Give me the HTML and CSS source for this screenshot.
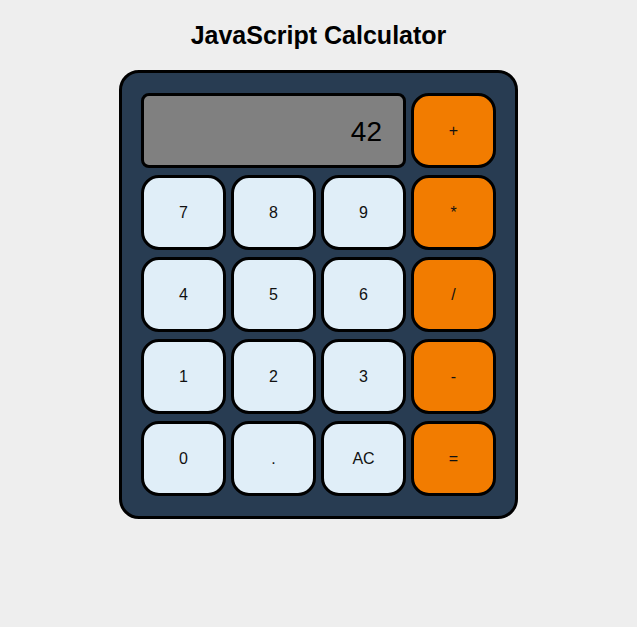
FILE: index.html
```html
<!DOCTYPE html>
<html>
<head>
<meta charset="utf-8">
<title>JavaScript Calculator</title>
<link rel="stylesheet" href="styles.css">
</head>
<body>
<h1 class="title">JavaScript Calculator</h1>
<div class="calculator">
  <div class="display">42</div>
  <button class="key op">+</button>
  <button class="key">7</button>
  <button class="key">8</button>
  <button class="key">9</button>
  <button class="key op">*</button>
  <button class="key">4</button>
  <button class="key">5</button>
  <button class="key">6</button>
  <button class="key op">/</button>
  <button class="key">1</button>
  <button class="key">2</button>
  <button class="key">3</button>
  <button class="key op">-</button>
  <button class="key">0</button>
  <button class="key">.</button>
  <button class="key">AC</button>
  <button class="key op">=</button>
</div>
</body>
</html>
```
FILE: styles.css
```css
* { box-sizing: border-box; }
body {
  margin: 0;
  background: #eeeeee;
  font-family: "Liberation Sans", Arial, sans-serif;
  display: flex;
  flex-direction: column;
  align-items: center;
}
.title {
  font-size: 25px;
  line-height: 28px;
  font-weight: bold;
  margin: 21px 0 21px;
  color: #000;
}
.calculator {
  background: #283c52;
  border: 3px solid #000;
  border-radius: 20px;
  padding: 20px 19px;
  display: grid;
  grid-template-columns: repeat(4, 85px);
  grid-auto-rows: 75px;
  column-gap: 5px;
  row-gap: 7px;
}
.display {
  grid-column: span 3;
  background: #808080;
  border: 3px solid #000;
  border-radius: 8px;
  font-size: 28px;
  line-height: 32px;
  text-align: right;
  padding: 20px 21px 0 0;
  color: #000;
}
.key {
  font-family: "Liberation Sans", Arial, sans-serif;
  font-size: 16px;
  color: #111;
  background: #e0eef8;
  border: 3px solid #000;
  border-radius: 18px;
  padding: 0;
  margin: 0;
}
.key.op { background: #f27c00; }
```
